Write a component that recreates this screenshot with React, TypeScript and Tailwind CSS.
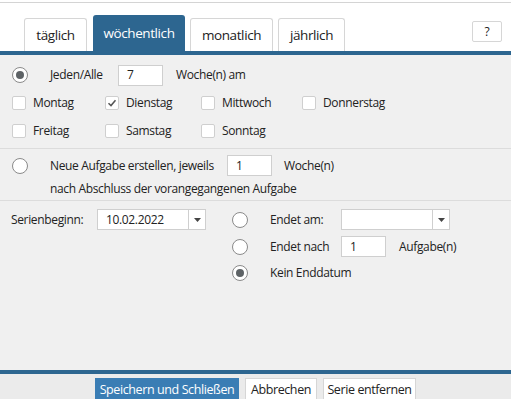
const DAYS = [
  [
    { label: "Montag", checked: false },
    { label: "Dienstag", checked: true },
    { label: "Mittwoch", checked: false },
    { label: "Donnerstag", checked: false },
  ],
  [
    { label: "Freitag", checked: false },
    { label: "Samstag", checked: false },
    { label: "Sonntag", checked: false },
  ],
];

const COLS = ["w-[93px]", "w-[96px]", "w-[101px]", "w-[100px]"];

function Radio({ checked }: { checked?: boolean }) {
  return (
    <span className="flex h-4 w-4 shrink-0 items-center justify-center rounded-full border border-[#8a8a8a] bg-white">
      {checked && <span className="h-2 w-2 rounded-full bg-[#5e6366]" />}
    </span>
  );
}

function Check({ checked }: { checked?: boolean }) {
  return (
    <span className="flex h-[14px] w-[14px] shrink-0 items-center justify-center rounded-[2px] border border-[#cfcfcf] bg-white">
      {checked && (
        <svg width="10" height="10" viewBox="0 0 10 10">
          <path d="M1.5 5.2 L4 7.6 L8.5 2.2" fill="none" stroke="#555" strokeWidth="1.5" />
        </svg>
      )}
    </span>
  );
}

function Field({ value, w }: { value: string; w: string }) {
  return (
    <div className={`${w} flex h-[21px] items-center border border-[#cfcfcf] bg-white pl-2 text-[#222]`}>
      {value}
    </div>
  );
}

function DateField({ value }: { value: string }) {
  return (
    <div className="flex h-[21px] w-[109px] border border-[#cfcfcf] bg-white">
      <div className="flex flex-1 items-center pl-2 text-[#222]">{value}</div>
      <div className="flex w-[17px] items-center justify-center border-l border-[#cfcfcf]">
        <svg width="7" height="4" viewBox="0 0 7 4">
          <path d="M0 0 H7 L3.5 4 Z" fill="#444" />
        </svg>
      </div>
    </div>
  );
}

export default function App() {
  return (
    <div className="flex h-[399px] w-[511px] flex-col overflow-hidden bg-[#f0f0f0] text-[12px] tracking-[-0.35px] text-[#222] [font-family:'Open_Sans',sans-serif]">
      {/* tabs */}
      <div className="bg-white pt-[2px]">
        <div className="flex h-[49px] items-end border-t border-[#d4d4d4] pl-6 pr-[9px] text-[13.5px] tracking-[-0.4px]">
          <div className="flex h-[33px] w-[63px] items-center justify-center rounded-t-[3px] border border-b-0 border-[#d6d6d6] text-[#222]">
            täglich
          </div>
          <div className="ml-[6px] flex h-[36px] w-[92px] items-center justify-center rounded-t-[3px] bg-[#2d6690] pt-[1px] text-white">
            wöchentlich
          </div>
          <div className="ml-[5px] flex h-[33px] w-[83px] items-center justify-center rounded-t-[3px] border border-b-0 border-[#d6d6d6] text-[#222]">
            monatlich
          </div>
          <div className="ml-[5px] flex h-[33px] w-[67px] items-center justify-center rounded-t-[3px] border border-b-0 border-[#d6d6d6] text-[#222]">
            jährlich
          </div>
          <div className="ml-auto mb-[9px] flex h-[21px] w-[30px] items-center justify-center rounded-[2px] border border-[#d6d6d6] text-[12px]">
            ?
          </div>
        </div>
      </div>
      <div className="h-[4px] bg-[#2d6690]" />

      {/* weekly */}
      <div className="flex h-[94px] flex-col border-b border-[#dcdcdc] pt-[9px]">
        <div className="flex h-[22px] items-center pl-3">
          <Radio checked />
          <span className="ml-[22px] w-[68px]">Jeden/Alle</span>
          <Field value="7" w="w-[45px]" />
          <span className="ml-[13px]">Woche(n) am</span>
        </div>
        {DAYS.map((row, i) => (
          <div key={i} className={`flex h-[14px] items-center pl-3 ${i === 0 ? "mt-[10px]" : "mt-[14px]"}`}>
            {row.map((d, j) => (
              <div key={d.label} className={`${COLS[j]} flex items-center gap-[7px]`}>
                <Check checked={d.checked} />
                <span>{d.label}</span>
              </div>
            ))}
          </div>
        ))}
      </div>

      {/* after completion */}
      <div className="flex h-[52px] flex-col border-b border-[#dcdcdc] pt-[6px]">
        <div className="flex h-[21px] items-center pl-3">
          <Radio />
          <span className="ml-[22px] w-[177px]">Neue Aufgabe erstellen, jeweils</span>
          <Field value="1" w="w-[45px]" />
          <span className="ml-[12px]">Woche(n)</span>
        </div>
        <div className="mt-[4px] pl-[50px]">nach Abschluss der vorangegangenen Aufgabe</div>
      </div>

      {/* range */}
      <div className="flex flex-1 pt-[8px]">
        <div className="flex h-[21px] items-center pl-[11px]">
          <span className="w-[86px]">Serienbeginn:</span>
          <DateField value="10.02.2022" />
        </div>
        <div className="ml-[26px] flex flex-col">
          <div className="flex h-[21px] items-center">
            <Radio />
            <span className="ml-[22px] w-[71px]">Endet am:</span>
            <DateField value="" />
          </div>
          <div className="mt-[6px] flex h-[21px] items-center">
            <Radio />
            <span className="ml-[22px] w-[71px]">Endet nach</span>
            <Field value="1" w="w-[45px]" />
            <span className="ml-[13px]">Aufgabe(n)</span>
          </div>
          <div className="mt-[5px] flex h-[21px] items-center">
            <Radio checked />
            <span className="ml-[22px]">Kein Enddatum</span>
          </div>
        </div>
      </div>

      {/* footer */}
      <div className="h-[4px] bg-[#2d6690]" />
      <div className="flex h-[25px] items-start justify-center gap-[6px] bg-[#ebebeb] pt-[4px] text-[12.5px] tracking-[-0.4px]">
        <div className="flex h-[24px] w-[144px] items-center justify-center whitespace-nowrap bg-[#3a7db4] text-white">
          Speichern und Schließen
        </div>
        <div className="flex h-[24px] w-[72px] items-center justify-center whitespace-nowrap border border-[#d6d6d6] bg-white">
          Abbrechen
        </div>
        <div className="flex h-[24px] w-[93px] items-center justify-center whitespace-nowrap border border-[#d6d6d6] bg-white">
          Serie entfernen
        </div>
      </div>
    </div>
  );
}
